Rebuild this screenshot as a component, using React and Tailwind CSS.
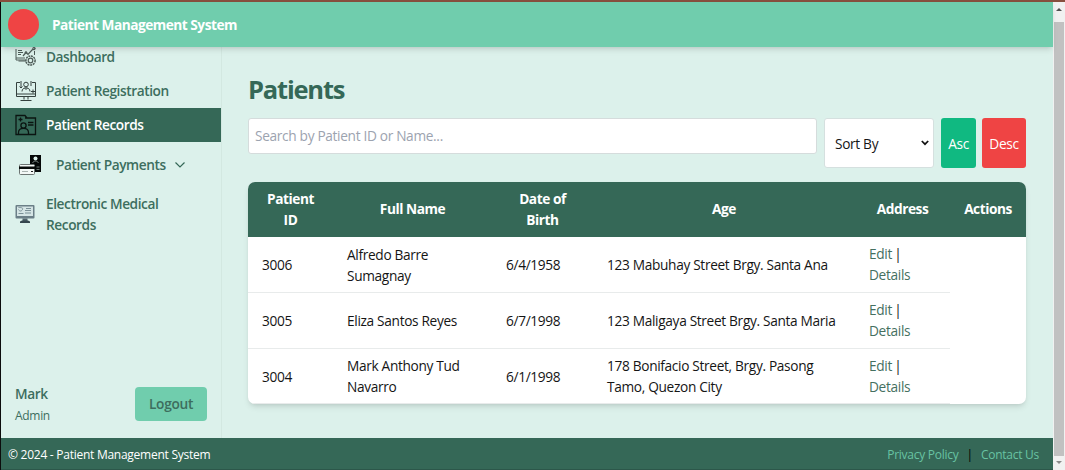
import React from "react";

const COLS = "grid grid-cols-[85px_159px_101px_262px_95px_76px]";

function Lines({ lines, className }) {
  return (
    <div className={className}>
      {lines.map((l) => (
        <div key={l} className="whitespace-nowrap">{l}</div>
      ))}
    </div>
  );
}

function DashboardIcon() {
  return (
    <svg className="mb-[2px]" width="22" height="22" viewBox="0 0 22 22" fill="none" stroke="#4d5b57" strokeWidth="1">
      <path d="M11 16H3.500M1 4v11h9M1 13h9M3 5.500h4M3 7.500h5M3 9.500h3M19.500 6v4" />
      <path d="M8 11l3-3.500 2 2 4-4.500 3-1.500" strokeWidth="1.200" />
      <circle cx="11" cy="7.500" r="0.900" /><circle cx="19" cy="3.500" r="1.300" />
      <circle cx="15.500" cy="15.500" r="4.600" strokeWidth="1.500" strokeDasharray="2 .7" />
      <circle cx="15.500" cy="15.500" r="2.300" strokeWidth="1.200" />
    </svg>
  );
}

function RegistrationIcon() {
  return (
    <svg className="mb-px" width="22" height="22" viewBox="0 0 22 22" fill="none" stroke="#35413e" strokeWidth="1">
      <path d="M5 2.500H1.500v14h19v-14H17M1.500 14h19M9 16.500v3M13 16.500v3M5.500 20.500h11" />
      <circle cx="11" cy="4.500" r="2.300" />
      <path d="M7 11.500c0-5 8-5 8 0M6 1v7l-1.500-1.500M6 8l1.500-1.500M16 1v5M9.500 8l1.500 1.500L12.500 8M16 11.500h4M18 9.500v4" />
    </svg>
  );
}

function RecordsIcon() {
  return (
    <svg width="22" height="22" viewBox="0 0 22 22" fill="none" stroke="#0b1411" strokeWidth="1.300">
      <path d="M1 20.500V1.500h9l2 2.500h8.500v16.500zM10 4h10.500M3.500 5.500h4M5.500 3.500v4M13 8.500h5.500M13 11h5.500" />
      <circle cx="8.500" cy="11.500" r="2.600" />
      <path d="M3.500 20v-1.500c0-5.500 10-5.500 10 0V20" />
    </svg>
  );
}

function PaymentsIcon() {
  return (
    <svg width="24" height="22" viewBox="0 0 24 22">
      <path d="M12 1h11v17h-6v-7h-5z" fill="#050808" />
      <circle cx="17.500" cy="4.500" r="2" fill="#dcf0ea" />
      <path d="M14.500 9c1-2.500 5-2.500 6 0" stroke="#77827f" fill="none" />
      <path d="M18.500 13h3M18.500 15.500h3" stroke="#6f7b77" />
      <rect x="1.500" y="10.500" width="15" height="10" rx="1" fill="#f3f8f6" stroke="#6c7472" />
      <path d="M1 12.500h16v2.500H1z" fill="#080b0a" />
      <path d="M4 17.500h6" stroke="#a9b3b0" /><path d="M13 17.500h2" stroke="#222" />
    </svg>
  );
}

function MonitorIcon() {
  return (
    <svg className="mb-px" width="20" height="20" viewBox="0 0 20 20">
      <rect x="0.500" y="1" width="19" height="13.500" rx="1" fill="#6b7f87" />
      <rect x="2" y="2.500" width="16" height="9.500" fill="#d5e5e5" />
      <path d="M3.500 3.500c2 0 5 0 4 2s-3 2-4 0M11 4.500h5M10 6.500h6M3.500 9.500h5M10 9h6" stroke="#7b9097" fill="none" />
      <path d="M7.500 14.500h5v2.500h-5z" fill="#53656d" />
      <path d="M5 19v-1.500l2-1h6l2 1V19z" fill="#35464e" />
    </svg>
  );
}

const ROWS = [
  { id: "3006", name: ["Alfredo Barre", "Sumagnay"], dob: "6/4/1958", addr: ["123 Mabuhay Street Brgy. Santa Ana"] },
  { id: "3005", name: ["Eliza Santos Reyes"], dob: "6/7/1998", addr: ["123 Maligaya Street Brgy. Santa Maria"] },
  { id: "3004", name: ["Mark Anthony Tud", "Navarro"], dob: "6/1/1998", addr: ["178 Bonifacio Street, Brgy. Pasong", "Tamo, Quezon City"] },
];

const HEADS = [["Patient", "ID"], ["Full Name"], ["Date of", "Birth"], ["Age"], ["Address"], ["Actions"]];

function Sidebar() {
  return (
    <aside className="-mt-2 flex w-[221px] shrink-0 flex-col border-r border-[#d3e8e1] pt-[1px] font-semibold tracking-[-0.43px] text-[#3d6e5e]">
      <div className="flex h-[34px] items-center pl-[14px]">
        <DashboardIcon /><span className="ml-[9px] pt-px whitespace-nowrap">Dashboard</span>
      </div>
      <div className="flex h-[34px] items-center pl-[14px]">
        <RegistrationIcon /><span className="ml-[9px] pt-px whitespace-nowrap">Patient Registration</span>
      </div>
      <div className="flex h-[34px] items-center bg-[#356857] pl-[14px] text-white">
        <RecordsIcon /><span className="ml-[9px] pt-px whitespace-nowrap">Patient Records</span>
      </div>
      <div className="flex h-[46px] items-center pl-[17px]">
        <PaymentsIcon /><span className="ml-[14px] pt-px whitespace-nowrap">Patient Payments</span>
        <svg className="ml-2" width="12" height="8" viewBox="0 0 12 8" fill="none" stroke="#356857" strokeWidth="1.200"><path d="M1.500 1.500L6 6l4.500-4.500" /></svg>
      </div>
      <div className="flex h-[53px] items-center pl-[14px]">
        <MonitorIcon />
        <Lines className="ml-[11px] pb-[2px] leading-[21px]" lines={["Electronic Medical", "Records"]} />
      </div>
      <div className="mt-auto flex h-[68px] items-start justify-between pr-[14px] pl-[14px]">
        <div className="pt-[14px] leading-[20px]">
          <div>Mark</div>
          <div className="text-[12px] leading-[23px] font-normal tracking-[-0.3px]">Admin</div>
        </div>
        <button className="mt-[17px] h-[34px] w-[72px] rounded-[4px] bg-[#70cdad] pt-px font-semibold tracking-[-0.3px]">Logout</button>
      </div>
    </aside>
  );
}

export default function App() {
  return (
    <div className="flex h-[470px] w-[1065px] flex-col overflow-hidden bg-[#dcf1eb] font-['Open_Sans',sans-serif] text-[13.7px] tracking-[-0.33px] text-[#151515]">
      <div className="h-[2px] shrink-0 bg-[#874f3e]" />
      <div className="flex min-h-0 flex-1">
        <div className="w-px shrink-0 bg-[#0c0c0c]" />
        <div className="flex min-w-0 flex-1 flex-col">
          <header className="relative z-10 flex h-[45px] shrink-0 items-center bg-[#70cdad] pl-[7px] shadow-md">
            <div className="h-[31px] w-[31px] rounded-full bg-[#ef4444]" />
            <h1 className="ml-[13px] pt-px font-bold whitespace-nowrap tracking-[-0.5px] text-white">Patient Management System</h1>
          </header>
          <div className="flex min-h-0 flex-1">
            <Sidebar />
            <main className="flex-1 pr-[27px] pl-[26px]">
              <h2 className="mt-[24px] h-[47px] text-[25.5px] leading-[36px] font-bold tracking-[-1.2px] text-[#356857]">Patients</h2>
              <div className="flex items-start">
                <div className="flex h-[36px] w-[569px] items-center rounded-[3px] border border-[#d5dcdc] bg-white pt-px pl-[6px] text-[#9ca3af]">Search by Patient ID or Name...</div>
                <div className="ml-[7px] flex h-[50px] w-[110px] items-center justify-between rounded-[3px] border border-[#d5e0df] bg-white pr-[4px] pl-[10px]">
                  <span className="pt-[2px]">Sort By</span>
                  <svg width="8" height="6" viewBox="0 0 8 6" fill="none" stroke="#111" strokeWidth="1.700"><path d="M.8 1L4 4.200 7.200 1" /></svg>
                </div>
                <button className="ml-[7px] h-[50px] w-[35px] rounded-[3px] bg-[#10b981] pt-[2px] text-white">Asc</button>
                <button className="ml-[6px] h-[50px] w-[44px] rounded-[3px] bg-[#ef4444] pt-[2px] text-white">Desc</button>
              </div>
              <div className="mt-[14px] w-[778px] overflow-hidden rounded-[7px] bg-white shadow-md">
                <div className={COLS + " h-[55px] bg-[#356857] text-center font-bold leading-[21px] tracking-[-0.45px] text-white"}>
                  {HEADS.map((h) => (
                    <div key={h[0]} className="flex items-center justify-center pb-[2px]"><Lines lines={h} /></div>
                  ))}
                </div>
                {ROWS.map((r) => (
                  <div key={r.id} className={COLS + " h-[56px] leading-[20.6px] last:h-[55px]"}>
                    <div className="flex items-center border-b border-[#e8ebeb] pt-[2px] pl-[14px]">{r.id}</div>
                    <div className="flex items-center border-b border-[#e8ebeb] pt-[2px] pl-[14px]"><Lines lines={r.name} /></div>
                    <div className="flex items-center border-b border-[#e8ebeb] pt-[2px] pl-[14px]">{r.dob}</div>
                    <div className="flex items-center border-b border-[#e8ebeb] pt-[2px] pl-[14px]"><Lines lines={r.addr} /></div>
                    <div className="flex items-center border-b border-[#e8ebeb] pt-px pl-[14px]">
                      <div>
                        <div><span className="text-[#45705f]">Edit</span><span className="-ml-px"> |</span></div>
                        <div className="text-[#45705f]">Details</div>
                      </div>
                    </div>
                  </div>
                ))}
              </div>
            </main>
          </div>
          <footer className="flex h-[32px] shrink-0 items-center justify-between border-b border-[#2c574a] bg-[#356857] pt-[2px] pr-[14px] pl-[7px] text-[12px] tracking-[-0.26px] text-white">
            <span>© 2024 - Patient Management System</span>
            <span className="flex text-[#68c3a3]"><span>Privacy Policy</span><span className="mx-[8px] text-black">|</span><span>Contact Us</span></span>
          </footer>
        </div>
        <div className="flex w-[12px] shrink-0 flex-col items-center bg-[#f1f1f1]">
          <svg className="h-[20px]" width="6" height="20" viewBox="0 0 6 20"><path d="M0 9l3-3 3 3z" fill="#505050" /></svg>
          <div className="w-[10px] flex-1 bg-[#c1c1c1]" />
          <svg width="6" height="14" viewBox="0 0 6 14"><path d="M0 5l3 3 3-3z" fill="#8a8a8a" /></svg>
        </div>
      </div>
    </div>
  );
}
